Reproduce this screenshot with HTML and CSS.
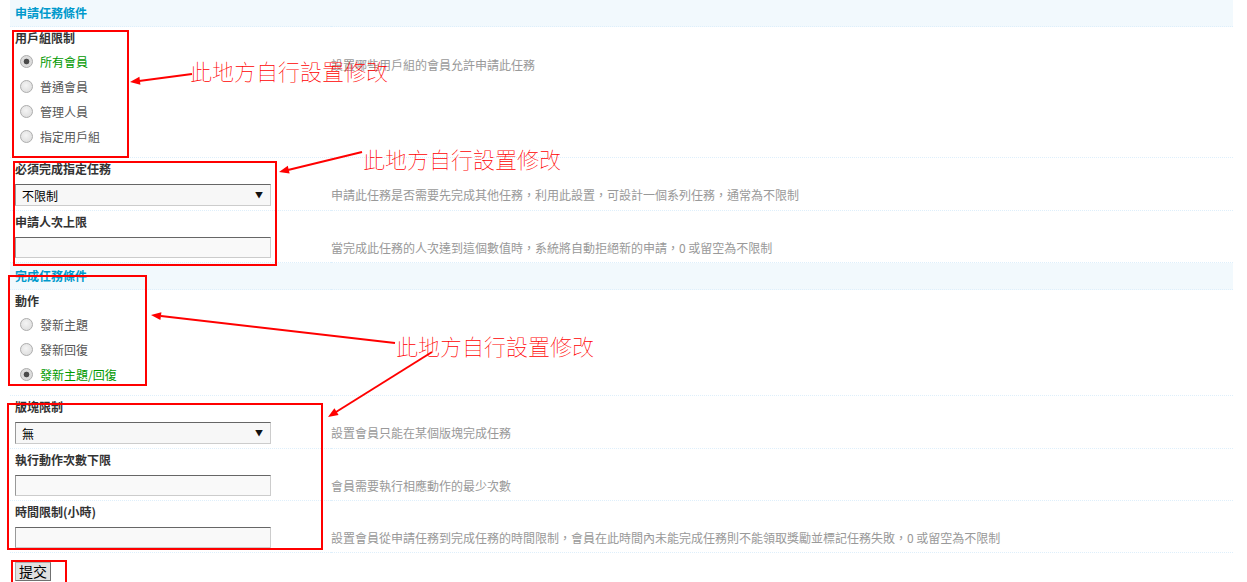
FILE: index.html
```html
<!DOCTYPE html>
<html lang="zh-Hant">
  <head>
    <meta charset="UTF-8" />
    <title>任務設置</title>
    <link rel="stylesheet" href="styles.css">
  </head>
  <body>
    <div class="page">
      <form class="wrap">
        <table class="tb">
          <colgroup>
            <col class="col-form" />
            <col />
          </colgroup>
          <tr><th colspan="2" class="partition first">申請任務條件</th></tr>
          <tr><td colspan="2" class="td27">用戶組限制</td></tr>
          <tr>
            <td class="rowform">
              <ul class="choices">
                <li class="checked"><input class="radio" type="radio" name="grouplimit" checked />所有會員</li>
                <li><input class="radio" type="radio" name="grouplimit" />普通會員</li>
                <li><input class="radio" type="radio" name="grouplimit" />管理人員</li>
                <li><input class="radio" type="radio" name="grouplimit" />指定用戶組</li>
              </ul>
            </td>
            <td class="tips">設置哪些用戶組的會員允許申請此任務</td>
          </tr>
          <tr><td colspan="2" class="td27 line">必須完成指定任務</td></tr>
          <tr>
            <td class="rowform">
              <span class="sel"><select><option>不限制</option></select></span>
            </td>
            <td class="tips">申請此任務是否需要先完成其他任務，利用此設置，可設計一個系列任務，通常為不限制</td>
          </tr>
          <tr><td colspan="2" class="td27 line">申請人次上限</td></tr>
          <tr>
            <td class="rowform"><input class="txt" type="text" /></td>
            <td class="tips">當完成此任務的人次達到這個數值時，系統將自動拒絕新的申請，0 或留空為不限制</td>
          </tr>

          <tr><th colspan="2" class="partition">完成任務條件</th></tr>
          <tr><td colspan="2" class="td27">動作</td></tr>
          <tr>
            <td class="rowform">
              <ul class="choices">
                <li><input class="radio" type="radio" name="action" />發新主題</li>
                <li><input class="radio" type="radio" name="action" />發新回復</li>
                <li class="checked"><input class="radio" type="radio" name="action" checked />發新主題/回復</li>
              </ul>
            </td>
            <td class="tips"></td>
          </tr>
          <tr><td colspan="2" class="td27 line">版塊限制</td></tr>
          <tr>
            <td class="rowform">
              <span class="sel"><select><option>無</option></select></span>
            </td>
            <td class="tips">設置會員只能在某個版塊完成任務</td>
          </tr>
          <tr><td colspan="2" class="td27 line">執行動作次數下限</td></tr>
          <tr>
            <td class="rowform"><input class="txt" type="text" /></td>
            <td class="tips">會員需要執行相應動作的最少次數</td>
          </tr>
          <tr><td colspan="2" class="td27 line">時間限制(小時)</td></tr>
          <tr>
            <td class="rowform"><input class="txt" type="text" /></td>
            <td class="tips">設置會員從申請任務到完成任務的時間限制，會員在此時間內未能完成任務則不能領取獎勵並標記任務失敗，0 或留空為不限制</td>
          </tr>
          <tr>
            <td colspan="2" class="submit line"><button type="button" class="btn">提交</button></td>
          </tr>
        </table>
      </form>

      <!-- annotations drawn over the screenshot -->
      <div class="mark mark-1"></div>
      <div class="mark mark-2"></div>
      <div class="mark mark-3"></div>
      <div class="mark mark-4"></div>
      <div class="mark mark-5"></div>

      <svg class="arrows" width="1247" height="582" viewBox="0 0 1247 582">
        <g stroke="#f00" stroke-width="2" fill="none">
          <line x1="192" y1="74" x2="139" y2="81" />
          <line x1="362" y1="152" x2="288" y2="170" />
          <line x1="395" y1="343" x2="161" y2="316" />
          <line x1="432" y1="352" x2="336" y2="412" />
        </g>
        <g fill="#f00">
          <polygon points="130,82 139.4,76.7 140.4,84.7" />
          <polygon points="279,172 287.8,165.8 289.6,173.6" />
          <polygon points="151,315 161.4,312.2 160.4,320.1" />
          <polygon points="328,417 334.4,408.3 338.6,415.1" />
        </g>
      </svg>

      <span class="note note-1">此地方自行設置修改</span>
      <span class="note note-2">此地方自行設置修改</span>
      <span class="note note-3">此地方自行設置修改</span>
    </div>
  </body>
</html>
```

FILE: styles.css
```css
body {
  margin: 0;
  font: 12px "Noto Sans CJK TC", "Liberation Sans", sans-serif;
  color: #333;
  background: #fff;
}

.page {
  position: relative;
  width: 1247px;
  height: 582px;
  overflow: hidden;
}

.wrap {
  margin: 0 0 0 10px;
  width: 1223px;
}

.tb {
  width: 100%;
  border-collapse: collapse;
  table-layout: fixed;
}

.col-form {
  width: 321px;
}

.tb td,
.tb th {
  padding: 0;
  text-align: left;
  vertical-align: top;
}

.partition {
  height: 26px;
  line-height: 26px;
  padding-left: 5px !important;
  background: #f2f9fd;
  color: #09c;
  font-weight: bold;
  border-top: 1px dotted #deeffb;
  border-bottom: 1px dotted #deeffb;
}

.partition.first {
  border-top: none;
}

.td27 {
  height: 22px;
  line-height: 22px;
  padding: 0 5px !important;
  font-weight: bold;
  color: #333;
}

.line {
  border-top: 1px dotted #deeffb;
}

.td27.line {
  height: 21px;
  line-height: 21px;
}

.rowform {
  padding: 5px 0 4px 5px !important;
}

.tips {
  padding: 8px 0 0 !important;
  line-height: 15px;
  color: #999;
  white-space: nowrap;
}

/* radio lists */
.choices {
  list-style: none;
  margin: -5px 0 4px;
  padding: 0;
}

.choices li {
  display: flex;
  align-items: center;
  height: 25px;
  color: #555;
}

.choices li.checked {
  color: #090;
}

.radio {
  appearance: none;
  box-sizing: border-box;
  width: 13px;
  height: 13px;
  margin: 0 7px 0 5px;
  border: 1px solid #aeaeae;
  border-radius: 50%;
  background: radial-gradient(circle at 45% 40%, #f4f4f4, #d8d8d8);
}

.radio:checked {
  background: radial-gradient(circle, #4a4a4a 0 2.5px, #dcdcdc 3.2px);
}

/* select and text inputs */
.sel {
  position: relative;
  display: block;
  width: 256px;
}

.sel select {
  appearance: none;
  display: block;
  box-sizing: border-box;
  width: 256px;
  height: 22px;
  margin: 0;
  padding: 0 0 0 6px;
  font: 12px "Noto Sans CJK TC", sans-serif;
  color: #000;
  border: 1px solid;
  border-color: #666 #ccc #ccc #999;
  border-radius: 0;
  background: #f7f7f7;
}

.sel::after {
  content: "▼";
  position: absolute;
  right: 8px;
  top: 6px;
  font-size: 8px;
  line-height: 10px;
  color: #111;
  pointer-events: none;
}

.txt {
  display: block;
  box-sizing: border-box;
  width: 256px;
  height: 21px;
  margin: 0;
  padding: 0 4px;
  border: 1px solid;
  border-color: #666 #ccc #ccc #999;
  background: #f9f9f9;
}

.submit {
  padding: 9px 0 0 5px !important;
}

.btn {
  display: block;
  box-sizing: border-box;
  width: 36px;
  height: 19px;
  padding: 0;
  font: 14px/17px "Noto Sans CJK TC", sans-serif;
  color: #000;
  background: #e1e1e1;
  border: 1px solid;
  border-color: #adadad #707070 #707070 #adadad;
}

/* red annotation boxes, arrows and notes */
.mark {
  position: absolute;
  box-sizing: border-box;
  border: 2px solid #f00;
}

.mark-1 { left: 12px; top: 30px; width: 117px; height: 128px; }
.mark-2 { left: 13px; top: 161px; width: 264px; height: 105px; }
.mark-3 { left: 8px; top: 275px; width: 139px; height: 111px; }
.mark-4 { left: 7px; top: 403px; width: 316px; height: 147px; }
.mark-5 { left: 11px; top: 560px; width: 56px; height: 30px; }

.arrows {
  position: absolute;
  left: 0;
  top: 0;
}

.note {
  position: absolute;
  font: 100 22px/22px "Noto Sans CJK TC", sans-serif;
  color: #f00;
  white-space: nowrap;
}

.note-1 { left: 190px; top: 59px; }
.note-2 { left: 363px; top: 147px; }
.note-3 { left: 396px; top: 334px; }
```
